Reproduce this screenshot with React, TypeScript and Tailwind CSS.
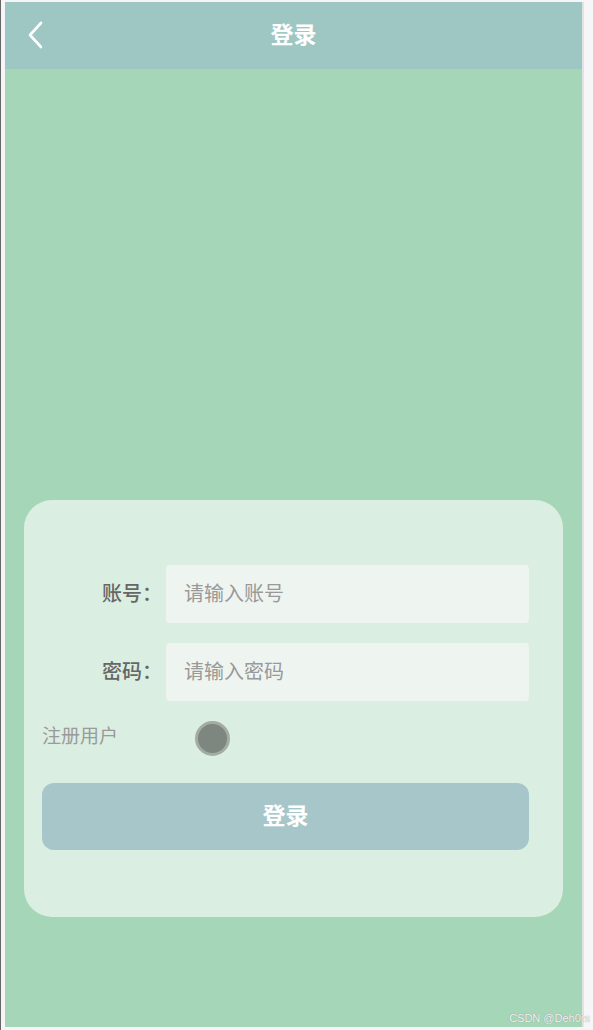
import React from 'react';

const cjk = { fontFamily: '"Microsoft YaHei", "Noto Sans CJK SC", sans-serif' };

const Field: React.FC<{ label: string; placeholder: string; type?: string }> = ({ label, placeholder, type = 'text' }) => (
  <div className="flex items-center">
    <span className="w-[124px] shrink-0 text-right text-[20px] font-medium text-[#666] pr-[4px] -mt-[2px]">{label}</span>
    <input
      type={type}
      placeholder={placeholder}
      className="h-[58px] flex-1 rounded-[4px] bg-[#eef5f1] pl-[18px] pb-[3px] text-[20px] text-[#555] placeholder:text-[#999] outline-none"
      style={cjk}
    />
  </div>
);

const App: React.FC = () => {
  return (
    <div className="relative h-[1030px] w-[593px] overflow-hidden border-l border-[#666] bg-[#f6f6f8] pt-[2px] pl-[4px] pr-[9px] pb-[3px]" style={cjk}>
      <div className="flex h-full flex-col border-r-[2px] border-[#e2e2e4]">
        <header className="relative flex h-[67px] shrink-0 items-center justify-center bg-[#9ec6c2]">
          <button className="absolute left-[19px] top-[19px] text-white">
            <svg width="26" height="28" viewBox="0 0 26 28" fill="none" stroke="white" strokeWidth="2.6" strokeLinecap="round" strokeLinejoin="round">
              <path d="M17 2 L6 14 L17 26" />
            </svg>
          </button>
          <span className="-mt-[5px] text-[23px] font-bold text-white">登录</span>
        </header>

        <main className="flex-1 bg-[#a5d6b7] px-[19px] pt-[431px]">
          <div className="rounded-[28px] bg-[#dbeee2] pl-[18px] pr-[34px] pt-[65px] pb-[67px]">
            <div className="flex flex-col gap-[20px]">
              <Field label="账号：" placeholder="请输入账号" />
              <Field label="密码：" placeholder="请输入密码" type="password" />
            </div>

            <div className="mt-[19px] flex h-[36px] items-center">
              <span className="w-[153px] text-[19px] text-[#9a9a9a] -mt-[5px]">注册用户</span>
              <span className="h-[35px] w-[35px] rounded-full border-[3px] border-[#a3aca3] bg-[#7e877f]" />
            </div>

            <button className="mt-[27px] flex h-[67px] w-full items-center justify-center rounded-[12px] bg-[#a6c6ca] pb-[5px] text-[23px] font-bold text-white">
              登录
            </button>
          </div>
        </main>
      </div>

      <span
        className="absolute right-[3px] bottom-[4px] text-[11px] text-[#f2f2f2] [text-shadow:0_0_1px_#888]"
        style={{ fontFamily: '"Liberation Sans", Arial, sans-serif' }}
      >
        CSDN @Deh0rs
      </span>
    </div>
  );
};

export default App;
